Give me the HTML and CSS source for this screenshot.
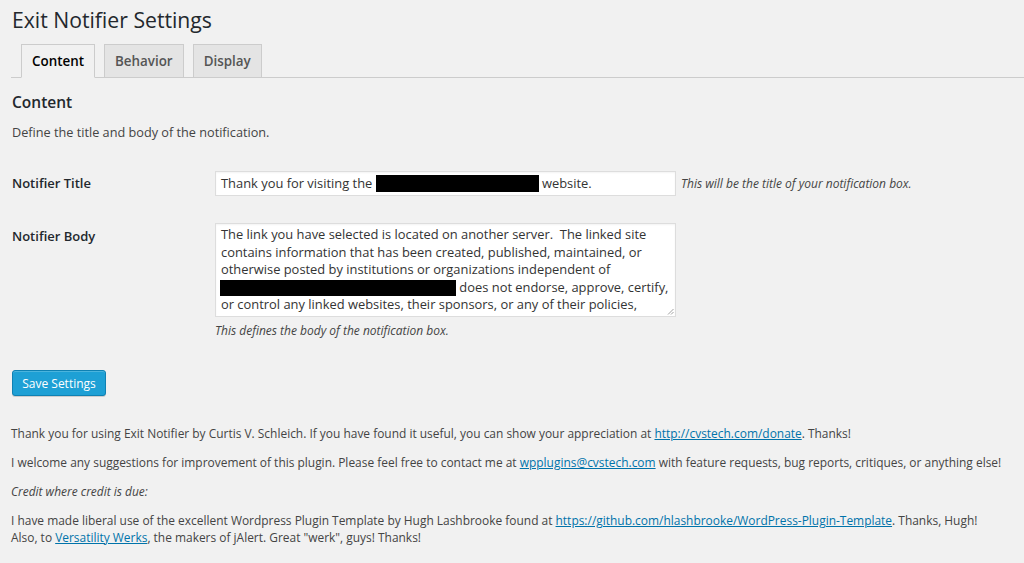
FILE: index.html
```html
<!DOCTYPE html>
<html>
<head>
<meta charset="utf-8">
<link rel="stylesheet" href="styles.css">
</head>
<body>
<div class="wrap">
  <h1 class="page-title">Exit Notifier Settings</h1>
  <nav class="tabs">
    <a class="tab active">Content</a>
    <a class="tab">Behavior</a>
    <a class="tab">Display</a>
  </nav>
  <h2 class="section-title">Content</h2>
  <p class="section-desc">Define the title and body of the notification.</p>
  <div class="form">
    <div class="row row-title">
      <div class="label">Notifier Title</div>
      <div class="field field-inline">
        <div class="input">Thank you for visiting the <span class="redact r1"></span> website.</div>
        <span class="desc">This will be the title of your notification box.</span>
      </div>
    </div>
    <div class="row row-body">
      <div class="label">Notifier Body</div>
      <div class="field">
        <div class="textarea">The link you have selected is located on another server.&nbsp; The linked site contains information that has been created, published, maintained, or otherwise posted by institutions or organizations independent of<br><span class="redact r2"></span> does not endorse, approve, certify, or control any linked websites, their sponsors, or any of their policies,<svg class="grip" width="7" height="7" viewBox="0 0 7 7"><path d="M6.5 1 L1 6.5 M6.5 4 L4 6.5" stroke="#888" stroke-width="0.8" fill="none"/></svg></div>
        <p class="desc desc-below">This defines the body of the notification box.</p>
      </div>
    </div>
  </div>
  <button class="btn">Save Settings</button>
  <div class="footer">
    <p>Thank you for using Exit Notifier by Curtis V. Schleich. If you have found it useful, you can show your appreciation at <a>http://cvstech.com/donate</a>. Thanks!</p>
    <p>I welcome any suggestions for improvement of this plugin. Please feel free to contact me at <a>wpplugins@cvstech.com</a> with feature requests, bug reports, critiques, or anything else!</p>
    <p><em>Credit where credit is due:</em></p>
    <p>I have made liberal use of the excellent Wordpress Plugin Template by Hugh Lashbrooke found at <a>https://github.com/hlashbrooke/WordPress-Plugin-Template</a>. Thanks, Hugh!<br>Also, to <a>Versatility Werks</a>, the makers of jAlert. Great "werk", guys! Thanks!</p>
  </div>
</div>
</body>
</html>
```

FILE: styles.css
```css
html, body {
  margin: 0;
  padding: 0;
  background: #f1f1f1;
}
body {
  font-family: "Open Sans", "Liberation Sans", sans-serif;
  color: #444;
  font-size: 11.95px;
}
.wrap {
  padding: 0 0 0 11px;
}
.page-title {
  margin: 0;
  padding: 6px 0 0 1px;
  font-size: 21.2px;
  font-weight: 400;
  line-height: 28px;
  color: #23282d;
}
.tabs {
  display: flex;
  gap: 9px;
  margin-top: 10px;
  padding-left: 10px;
  border-bottom: 1px solid #ccc;
  height: 33px;
  align-items: flex-end;
}
.tab {
  display: block;
  box-sizing: border-box;
  height: 34px;
  margin-bottom: -1px;
  padding: 0 10px;
  line-height: 32px;
  font-size: 13.4px;
  font-weight: 600;
  color: #555;
  background: #e4e4e4;
  border: 1px solid #ccc;
}
.tab.active {
  background: #f1f1f1;
  color: #000;
  border-bottom-color: #f1f1f1;
}
.section-title {
  margin: 14px 0 0 1px;
  font-size: 15.5px;
  font-weight: 600;
  line-height: 20px;
  color: #23282d;
}
.section-desc {
  margin: 12px 0 0 1px;
  line-height: 17px;
  font-size: 12.7px;
}
.form {
  margin-top: 30px;
}
.row {
  display: flex;
}
.label {
  width: 203px;
  padding-left: 1px;
  font-weight: 600;
  color: #23282d;
  font-size: 13px;
}
.row-title .label {
  padding-top: 3px;
}
.row-body {
  margin-top: 27px;
}
.row-body .label {
  padding-top: 4px;
}
.field-inline {
  display: flex;
  align-items: center;
  gap: 5px;
}
.input, .textarea {
  box-sizing: border-box;
  width: 461px;
  background: #fff;
  border: 1px solid #ddd;
  box-shadow: inset 0 1px 2px rgba(0,0,0,0.05);
  color: #333;
  font-size: 12.9px;
}
.input {
  height: 25px;
  line-height: 23px;
  padding: 0 5px;
  white-space: nowrap;
}
.textarea {
  position: relative;
  height: 94px;
  padding: 2px 3px 2px 5px;
  line-height: 17.5px;
  overflow: hidden;
}
.grip {
  position: absolute;
  right: 1px;
  bottom: 1px;
}
.redact {
  display: inline-block;
  background: #000;
  vertical-align: middle;
}
.r1 {
  width: 163px;
  height: 17px;
  margin-top: -2px;
}
.r2 {
  width: 236px;
  height: 16px;
  margin-left: -1px;
}
.desc {
  font-style: italic;
  font-size: 12px;
}
.desc-below {
  margin: 5px 0 0;
}
.btn {
  display: block;
  margin: 31px 0 0 1px;
  width: 94px;
  height: 26px;
  padding: 0;
  font-family: inherit;
  font-size: 12px;
  font-weight: 500;
  color: #fff;
  background: #1ea0d5;
  border: 1px solid #0f81b3;
  border-radius: 3px;
  box-shadow: inset 0 1px 0 rgba(120,200,230,0.5), 0 1px 0 rgba(0,0,0,0.15);
}
.footer {
  margin-top: 30px;
}
.footer p {
  margin: 0 0 12.5px;
  line-height: 16.5px;
}
.footer a {
  color: #0073aa;
  text-decoration: underline;
}
```
